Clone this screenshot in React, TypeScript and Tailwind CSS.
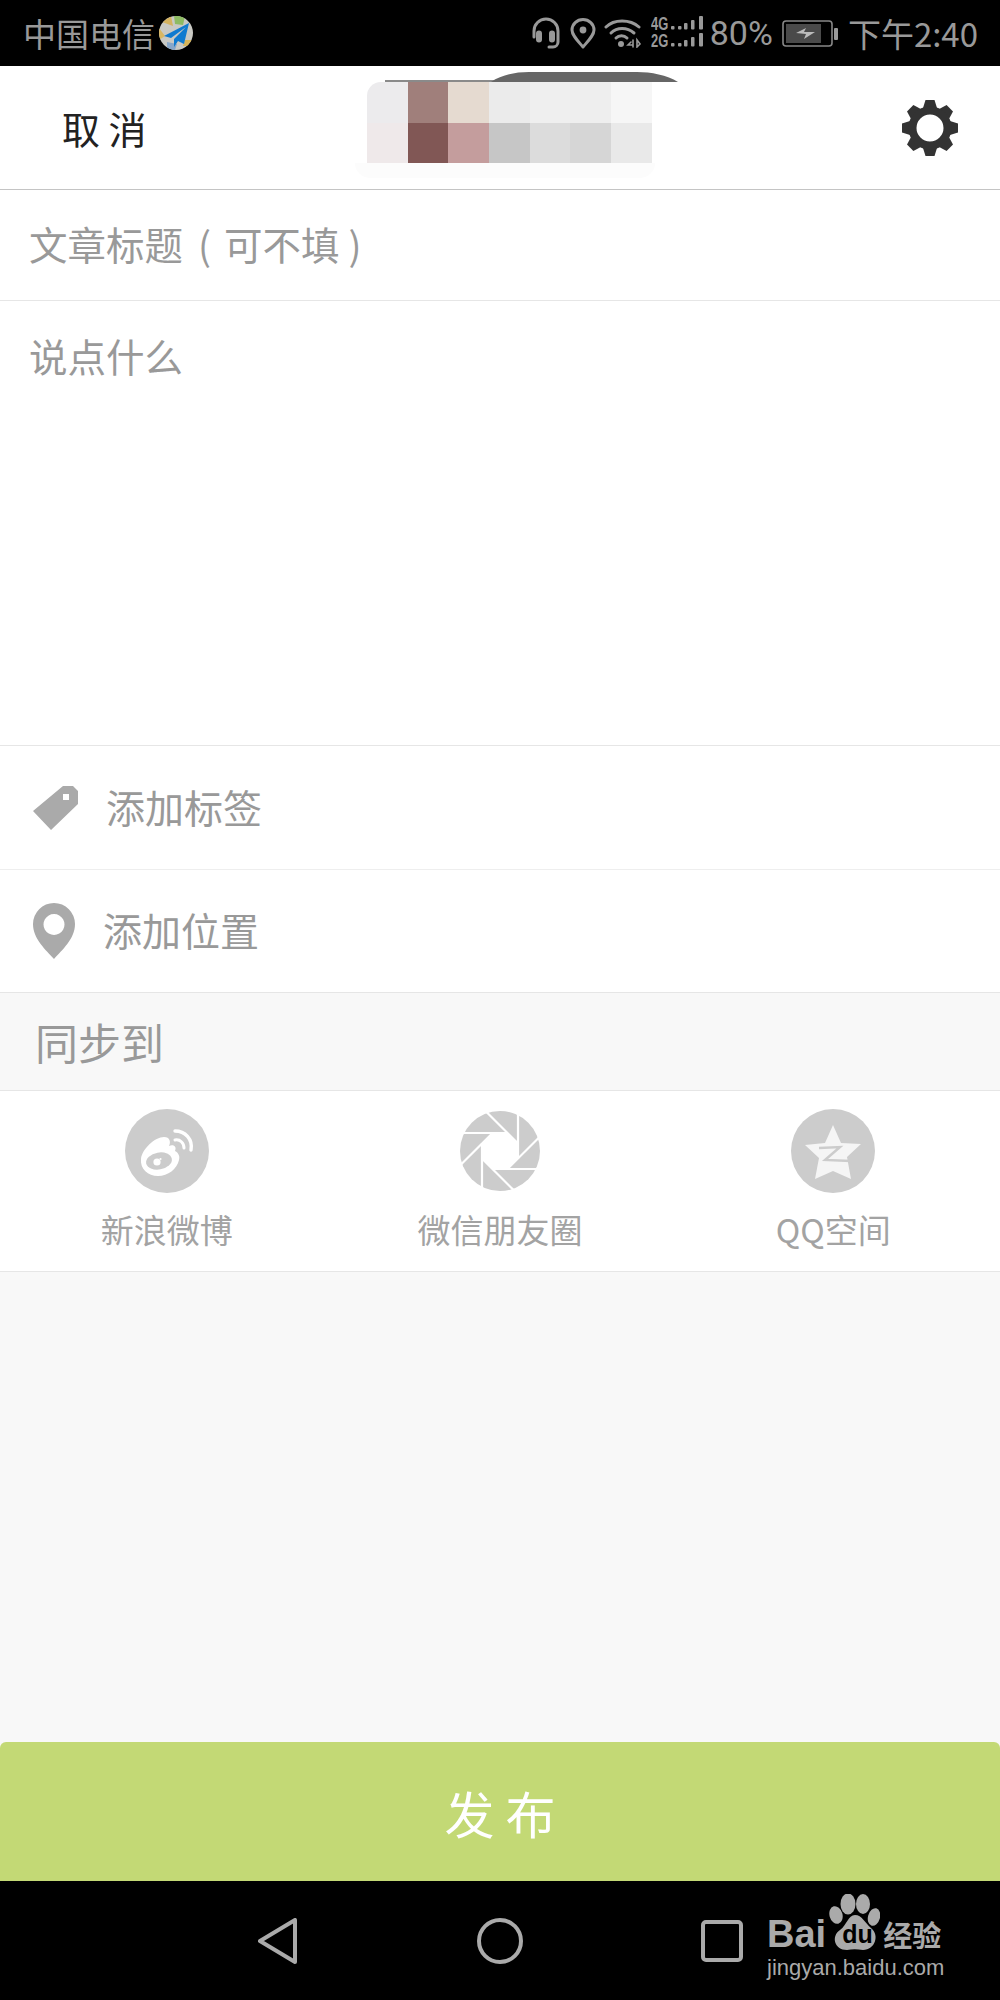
import React from 'react';

const FONT = "font-['Noto_Sans_CJK_SC','Noto_Sans',sans-serif]";

const mosaic = [
  ['#ecebed', '#a07f7b', '#e5dad0', '#ebebeb', '#efefef', '#eeeeee', '#f6f6f6'],
  ['#efe9ea', '#815755', '#c49d9d', '#c6c6c6', '#dcdcdc', '#d6d6d6', '#e9e9e9'],
];

const PlaneBadge = () => (
  <svg width="34" height="34" viewBox="0 0 34 34" className="ml-[4px]">
    <defs>
      <clipPath id="badge"><circle cx="17" cy="17" r="17" /></clipPath>
    </defs>
    <g clipPath="url(#badge)">
      <rect width="34" height="34" fill="#c9c9c4" />
      <path d="M3 6 L12 0 L14 10 Z" fill="#d4b260" />
      <path d="M15 0 H26 L24 9 L16 8 Z" fill="#8dbb62" />
      <path d="M26 24 H34 V30 L24 30 Z" fill="#d7b458" />
      <path d="M0 12 L6 20 L0 24 Z" fill="#d9b763" />
      <path d="M8 26 L18 28 L16 34 H8 Z" fill="#88a7c9" />
    </g>
    <path d="M30 7 L5 20 L12 22 L27 11 L15 23 L15 31 L19 25 L25 28 Z" fill="#0f7ad0" />
  </svg>
);

const StatusIcons = () => (
  <>
    <svg width="30" height="32" viewBox="0 0 30 32" fill="none" stroke="#999" strokeWidth="3" strokeLinecap="round">
      <path d="M3 20 V14 a12 12 0 0 1 24 0 V25 a5 5 0 0 1 -5 5 H18" />
      <rect x="6.5" y="15" width="3" height="9" rx="1.5" fill="#999" />
      <rect x="19.5" y="15" width="3" height="9" rx="1.5" fill="#999" />
    </svg>
    <svg width="26" height="31" viewBox="0 0 26 31" fill="none" stroke="#999" strokeWidth="3" className="ml-[9px]">
      <path d="M13 29 C7 22 2 17 2 12 a11 10.5 0 0 1 22 0 C24 17 19 22 13 29 Z" strokeLinejoin="round" />
      <circle cx="13" cy="12" r="3.4" fill="#999" stroke="none" />
    </svg>
    <svg width="38" height="30" viewBox="0 0 38 30" fill="none" stroke="#999" strokeWidth="3" strokeLinecap="round" className="ml-[8px]">
      <path d="M2 9 C10 1 26 1 35 9" />
      <path d="M7 15 C13 9 23 9 30 15" />
      <path d="M12 20 C15 17 20 17 23 20" />
      <circle cx="17" cy="26" r="3" fill="#999" stroke="none" />
      <path d="M27 24 L24 27 H29 M29 22 V29 M33 22 V29 L36 26 Z" strokeWidth="1.6" />
    </svg>
    <div className="ml-[9px] w-[20px] flex flex-col text-[#999] text-[18px] leading-[17px] font-bold font-['Liberation_Sans',sans-serif]">
      <span className="scale-x-[0.72] origin-left">4G</span>
      <span className="scale-x-[0.72] origin-left">2G</span>
    </div>
    <svg width="33" height="34" viewBox="0 0 33 34" fill="#999">
      {[0, 17].map((y) => (
        <g key={y}>
          <rect x="0" y={y + 10} width="3.5" height="3.5" rx="1" />
          <rect x="7" y={y + 10} width="3.5" height="3.5" rx="1" />
          <rect x="13" y={y + 7} width="3.5" height="6.5" rx="1" />
          <rect x="20" y={y + 4} width="3.5" height="9.5" rx="1" />
          <rect x="28" y={y} width="4" height="13.5" rx="1" />
        </g>
      ))}
    </svg>
  </>
);

const Battery = () => (
  <svg width="57" height="27" viewBox="0 0 57 27" className="ml-[9px]">
    <rect x="1" y="1" width="49" height="25" rx="3" fill="none" stroke="#888" strokeWidth="1.6" />
    <rect x="4" y="4" width="35" height="19" fill="#4a4a4a" />
    <rect x="52" y="8" width="4" height="12" rx="1" fill="#999" />
    <path d="M14 13 L24 8 L22 12 L33 12 L22 19 L24 14 Z" fill="#bbb" />
  </svg>
);

const Gear = () => (
  <svg width="60" height="60" viewBox="-30 -30 60 60" fill="#333">
    {[0, 45, 90, 135, 180, 225, 270, 315].map((a) => (
      <path key={a} d="M-7 -20 L-4.5 -28 H4.5 L7 -20 Z" transform={`rotate(${a})`} />
    ))}
    <circle r="17.5" fill="none" stroke="#333" strokeWidth="8" />
  </svg>
);

const TagIcon = () => (
  <svg width="48" height="46" viewBox="0 0 48 46" className="shrink-0">
    <path
      fillRule="evenodd"
      d="M1 26 L31 1 H41 L46 6 V19 L19 45 Z M31 9 V15 H37 V9 Z"
      fill="#aaa"
    />
  </svg>
);

const PinIcon = () => (
  <svg width="42" height="56" viewBox="0 0 42 56" className="shrink-0">
    <path
      fillRule="evenodd"
      d="M21 56 C13 47 0 36 0 21 a21 21 0 0 1 42 0 C42 36 29 47 21 56 Z M21 11 a10.5 10.5 0 1 0 0.01 0 Z"
      fill="#aaa"
    />
  </svg>
);

const WeiboIcon = () => (
  <svg width="84" height="84" viewBox="0 0 84 84">
    <circle cx="42" cy="42" r="42" fill="#ccc" />
    <path
      d="M16 50 C17 40 30 28 39 28 C45 28 46 33 44 37 C49 35 52 38 50 42 C54 44 55 48 54 51 C52 60 43 67 33 67 C23 67 15 60 16 50 Z"
      fill="#fff"
    />
    <ellipse cx="34" cy="52" rx="13" ry="8.5" fill="#ccc" transform="rotate(-10 34 52)" />
    <circle cx="32" cy="53" r="3.6" fill="#fff" />
    <circle cx="35.5" cy="50" r="1.1" fill="#fff" />
    <path d="M50 22 C60 22 68 30 66 41" fill="none" stroke="#fff" strokeWidth="3.4" strokeLinecap="round" />
    <path d="M50 31 C55 30 59 34 59 39" fill="none" stroke="#fff" strokeWidth="3" strokeLinecap="round" />
  </svg>
);

const ApertureIcon = () => (
  <svg width="84" height="84" viewBox="-42 -42 84 84">
    <circle r="40" fill="#ccc" />
    {[0, 45, 90, 135, 180, 225, 270, 315].map((a) => (
      <line key={a} x1="-46" y1="-18" x2="7.5" y2="-18" stroke="#fff" strokeWidth="2.2" transform={`rotate(${a})`} />
    ))}
    <polygon points="-7.5,-18 7.5,-18 18,-7.5 18,7.5 7.5,18 -7.5,18 -18,7.5 -18,-7.5" fill="#fff" />
  </svg>
);

const QzoneIcon = () => (
  <svg width="84" height="84" viewBox="-42 -42 84 84">
    <circle r="42" fill="#ccc" />
    <path d="M0 -26 L8 -8 L28 -7 L14 6 L18 28 L0 20 L-18 28 L-14 7 L-28 -6 L-8 -8 Z" fill="#f5f5f5" strokeLinejoin="round" />
    <path d="M-14 -3 L7 -4 L-8 9 L18 10" fill="none" stroke="#ccc" strokeWidth="2.4" />
  </svg>
);

const BaiduPaw = () => (
  <svg width="52" height="57" viewBox="0 0 52 57" fill="#aaa">
    <ellipse cx="8" cy="21" rx="6.5" ry="9" transform="rotate(-15 8 21)" />
    <ellipse cx="20" cy="10" rx="7.5" ry="10.5" />
    <ellipse cx="35" cy="10" rx="7" ry="10" />
    <ellipse cx="46" cy="23" rx="6" ry="9" transform="rotate(15 46 23)" />
    <path d="M27 21 C34 21 37 29 43 34 C52 41 47 56 35 56 C29 55 24 55 19 56 C6 56 3 42 12 36 C19 31 20 21 27 21 Z" />
  </svg>
);

const shareTargets = [
  { label: '新浪微博', icon: <WeiboIcon /> },
  { label: '微信朋友圈', icon: <ApertureIcon /> },
  { label: 'QQ空间', icon: <QzoneIcon /> },
];

export default function App() {
  return (
    <div className={`relative w-[1000px] h-[2000px] flex flex-col bg-[#f8f8f8] overflow-hidden ${FONT}`}>
      {/* status bar */}
      <div className="h-[66px] shrink-0 bg-black flex items-center justify-between pl-[23px] pr-[22px] text-[#999] text-[33px] leading-none">
        <div className="flex items-center">
          <span>中国电信</span>
          <PlaneBadge />
        </div>
        <div className="flex items-center">
          <StatusIcons />
          <span className="ml-[6px] text-[34px] font-['Roboto',sans-serif]">80%</span>
          <Battery />
          <span className="ml-[9px]">下午2:40</span>
        </div>
      </div>

      {/* header */}
      <div className="relative h-[124px] shrink-0 bg-white border-b border-[#c4c4c4] flex items-center justify-between pl-[62px] pr-[40px]">
        <span className="text-[38px] leading-none text-[#222]">取 消</span>
        <div className="absolute left-[367px] top-[16px]">
          <div className="absolute left-[18px] -top-[2px] w-[110px] h-[2px] bg-[#8a8a8a]" />
          <svg width="187" height="10" viewBox="0 0 187 10" className="absolute left-[124px] -top-[10px]">
            <path d="M0 10 C10 3 24 0 38 0 H146 C160 0 176 3 187 10 Z" fill="#666" />
          </svg>
          <div className="absolute -left-[12px] top-[81px] w-[300px] h-[15px] bg-[#fcfcfc] rounded-b-[24px]" />
          <div className="grid grid-cols-[repeat(7,40.7px)] grid-rows-[40.7px_40.7px] relative rounded-tl-[14px] overflow-hidden">
            {mosaic.flat().map((c, i) => (
              <div key={i} style={{ backgroundColor: c }} />
            ))}
          </div>
        </div>
        <Gear />
      </div>

      {/* inputs */}
      <div className="h-[111px] shrink-0 bg-white border-b border-[#e6e6e6] flex items-center pl-[29px] pb-[3px] text-[38.5px] text-[#999] leading-none">
        <span>文章标题</span>
        <span className="ml-[15px]">(</span>
        <span className="ml-[13px]">可不填</span>
        <span className="ml-[9px]">)</span>
      </div>
      <div className="h-[445px] shrink-0 bg-white border-b border-[#e6e6e6] pl-[29px] pt-[35px] text-[38.5px] text-[#999] leading-none">
        说点什么
      </div>
      <div className="h-[124px] shrink-0 bg-white border-b border-[#eeeeee] flex items-center pl-[32px] gap-[26px] text-[39px] text-[#999] leading-none">
        <TagIcon />
        <span className="-mt-[3px]">添加标签</span>
      </div>
      <div className="h-[123px] shrink-0 bg-white border-b border-[#e6e6e6] flex items-center pl-[33px] gap-[28px] text-[39px] text-[#999] leading-none">
        <PinIcon />
        <span className="-mt-[3px]">添加位置</span>
      </div>

      {/* share */}
      <div className="h-[98px] shrink-0 border-b border-[#e6e6e6] flex items-center pl-[35px] text-[43px] text-[#999] leading-none">
        同步到
      </div>
      <div className="h-[181px] shrink-0 bg-white border-b border-[#e6e6e6] grid grid-cols-3 pt-[18px]">
        {shareTargets.map((t) => (
          <div key={t.label} className="flex flex-col items-center gap-[20px] text-[33px] leading-none text-[#a3a3a3]">
            {t.icon}
            <span>{t.label}</span>
          </div>
        ))}
      </div>

      <div className="flex-1" />

      {/* submit */}
      <div className="h-[139px] shrink-0 bg-[#c3d975] rounded-t-[6px] flex items-center justify-center text-white text-[50px] leading-none">
        发 布
      </div>

      {/* nav bar */}
      <div className="h-[119px] shrink-0 bg-black flex items-start pt-[37px] pl-[258px]">
        <svg width="40" height="46" viewBox="0 0 40 46" fill="none" stroke="#aaa" strokeWidth="4" strokeLinejoin="round">
          <path d="M37 2 V44 L2 23 Z" />
        </svg>
        <svg width="46" height="46" viewBox="0 0 46 46" fill="none" stroke="#aaa" strokeWidth="4" className="ml-[179px]">
          <circle cx="23" cy="23" r="21" />
        </svg>
        <svg width="42" height="42" viewBox="0 0 42 42" fill="none" stroke="#aaa" strokeWidth="4" className="ml-[178px] mt-[2px]">
          <rect x="2" y="2" width="38" height="38" rx="3" />
        </svg>
      </div>

      {/* watermark */}
      <div className="absolute left-[767px] top-[1894px] w-[190px] text-[#aaa] font-['Liberation_Sans',sans-serif]">
        <div className="flex items-end h-[57px] whitespace-nowrap">
          <span className="text-[38px] leading-[34px] font-bold">Bai</span>
          <div className="relative ml-[2px] w-[52px] h-[57px] shrink-0">
            <BaiduPaw />
            <span className="absolute left-[14px] top-[28px] text-[25px] leading-[24px] font-bold text-black">du</span>
          </div>
          <span className={`ml-[3px] text-[29px] leading-[34px] font-bold ${FONT}`}>经验</span>
        </div>
        <div className="mt-[5px] text-[22px] leading-[24px] whitespace-nowrap">jingyan.baidu.com</div>
      </div>
    </div>
  );
}
